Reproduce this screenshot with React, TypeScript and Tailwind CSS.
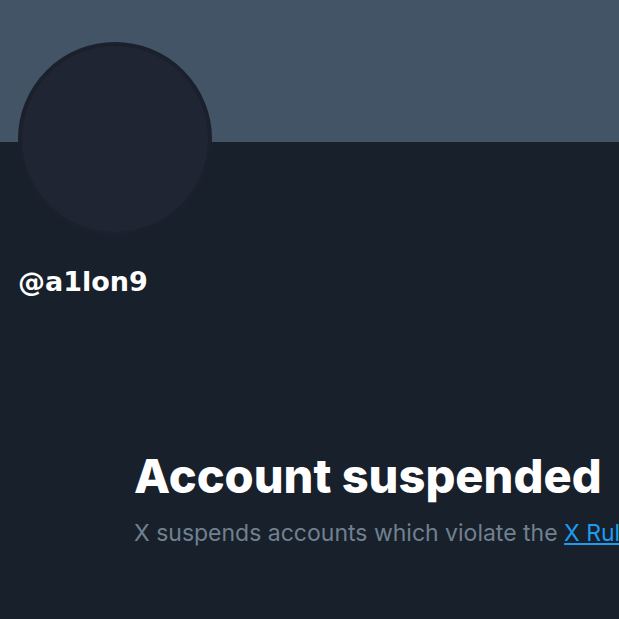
import React from 'react';

export default function App() {
  return (
    <div className="relative w-[619px] h-[619px] overflow-hidden bg-[#18202b] font-['Inter',sans-serif]">
      {/* banner */}
      <div className="h-[142px] bg-[#435466]" />

      {/* avatar */}
      <div className="absolute left-[18px] top-[42px] w-[194px] h-[194px] rounded-full bg-[#1f2533] border-[4px] border-[#1a212d]" />

      <div className="pt-[124px] pl-[18px]">
        <div className="text-[27px] leading-[32px] font-bold text-white font-['DejaVu_Sans',sans-serif]">
          @a1lon9
        </div>
      </div>

      <div className="mt-[150px] pl-[134px] whitespace-nowrap">
        <h1 className="text-[47px] leading-[56px] font-extrabold text-white">
          Account suspended
        </h1>
        <p className="mt-[14px] text-[23px] leading-[30px] text-[#71808f]">
          X suspends accounts which violate the{' '}
          <a href="#" className="text-[#1d9bf0] underline">
            X Rules
          </a>
          .
        </p>
      </div>
    </div>
  );
}
